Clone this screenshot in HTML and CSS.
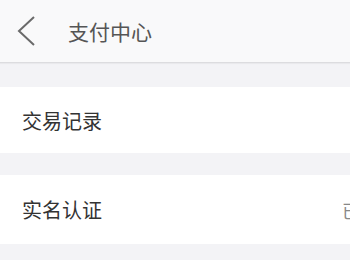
FILE: index.html
```html
<!DOCTYPE html>
<html lang="zh">
<head>
<meta charset="utf-8">
<link rel="stylesheet" href="styles.css">
</head>
<body>
<div class="page">
  <header class="nav">
    <svg class="back" width="20" height="30" viewBox="0 0 20 30"><path d="M18 1 L3 15 L18 29" fill="none" stroke="#6a6a6a" stroke-width="2"/></svg>
    <span class="title">支付中心</span>
  </header>
  <div class="gap first"></div>
  <div class="row"><span class="label">交易记录</span></div>
  <div class="gap"></div>
  <div class="row tall"><span class="label">实名认证</span><span class="value">已认证</span></div>
</div>
</body>
</html>
```
FILE: styles.css
```css
html, body { margin: 0; padding: 0; }
body { background: #f3f3f6; font-family: "Noto Sans CJK SC", "Noto Sans", sans-serif; width: 350px; height: 260px; overflow: hidden; }
.page { width: 350px; }
.nav { height: 62px; background: #f9f9fa; border-bottom: 1px solid #dcdcdf; display: flex; align-items: center; box-shadow: 0 1px 1px rgba(0,0,0,0.04); }
.back { margin-left: 16px; }
.title { margin-left: 32px; font-size: 21px; color: #555; }
.gap { height: 22px; }
.gap.first { height: 24px; }
.row { height: 66px; background: #fff; display: flex; align-items: center; justify-content: space-between; white-space: nowrap; overflow: hidden; }
.row.tall { height: 69px; }
.label { margin-left: 22px; font-size: 20px; color: #333; }
.value { font-size: 18px; color: #888; margin-right: -46px; }
```
